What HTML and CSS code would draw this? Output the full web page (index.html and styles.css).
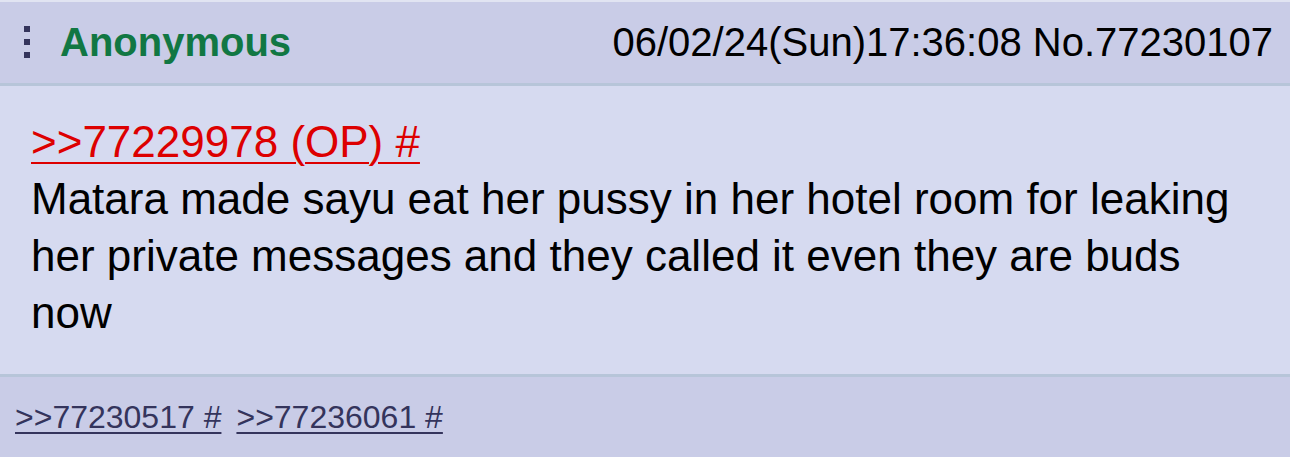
FILE: index.html
```html
<!DOCTYPE html>
<html lang="en">
<head>
<meta charset="utf-8">
<title>Post</title>
<link rel="stylesheet" href="styles.css">
</head>
<body>
<div class="post">
  <div class="post-head">
    <div class="head-left">
      <span class="menu" aria-label="menu"><i></i><i></i><i></i></span>
      <span class="name">Anonymous</span>
    </div>
    <div class="date">06/02/24(Sun)17:36:08 No.77230107</div>
  </div>
  <div class="post-body">
    <a class="quotelink" href="#p77229978">&gt;&gt;77229978 (OP) #</a>
    <div class="message">Matara made sayu eat her pussy in her hotel room for leaking her private messages and they called it even they are buds now</div>
  </div>
  <div class="post-foot">
    <a class="backlink" href="#p77230517">&gt;&gt;77230517 #</a>
    <a class="backlink" href="#p77236061">&gt;&gt;77236061 #</a>
  </div>
</div>
</body>
</html>
```

FILE: styles.css
```css
html, body {
  margin: 0;
  padding: 0;
}
body {
  background: #e1e4f2;
  font-family: "Liberation Sans", Arial, sans-serif;
  color: #000;
  padding-top: 2px;
  overflow: hidden;
}
.post {
  display: flex;
  flex-direction: column;
}
.post-head {
  display: flex;
  align-items: center;
  justify-content: space-between;
  height: 81px;
  padding: 0 17px 0 24px;
  background: #c9cce7;
  border-bottom: 3px solid #b7c5d9;
}
.head-left {
  display: flex;
  align-items: center;
  gap: 30px;
}
.menu {
  display: flex;
  flex-direction: column;
  gap: 7px;
  margin-top: -2px;
}
.menu i {
  display: block;
  width: 6px;
  height: 6px;
  background: #34345c;
}
.name {
  font-weight: bold;
  font-size: 40px;
  color: #117743;
}
.date {
  font-size: 40px;
  color: #000;
}
.post-body {
  background: #d6daf0;
  padding: 27px 31px 33px;
  font-size: 44px;
  line-height: 57px;
  border-bottom: 3px solid #b7c5d9;
}
.quotelink {
  display: block;
  color: #dd0000;
  text-decoration: underline;
  text-decoration-thickness: 2px;
  text-underline-offset: 5px;
}
.message {
  color: #000;
}
.post-foot {
  background: #c9cce7;
  display: flex;
  gap: 15px;
  padding: 20px 15px 40px;
  font-size: 32px;
  line-height: 40px;
}
.backlink {
  color: #34345c;
  text-decoration: underline;
  text-decoration-thickness: 2px;
  text-underline-offset: 4px;
}
```
